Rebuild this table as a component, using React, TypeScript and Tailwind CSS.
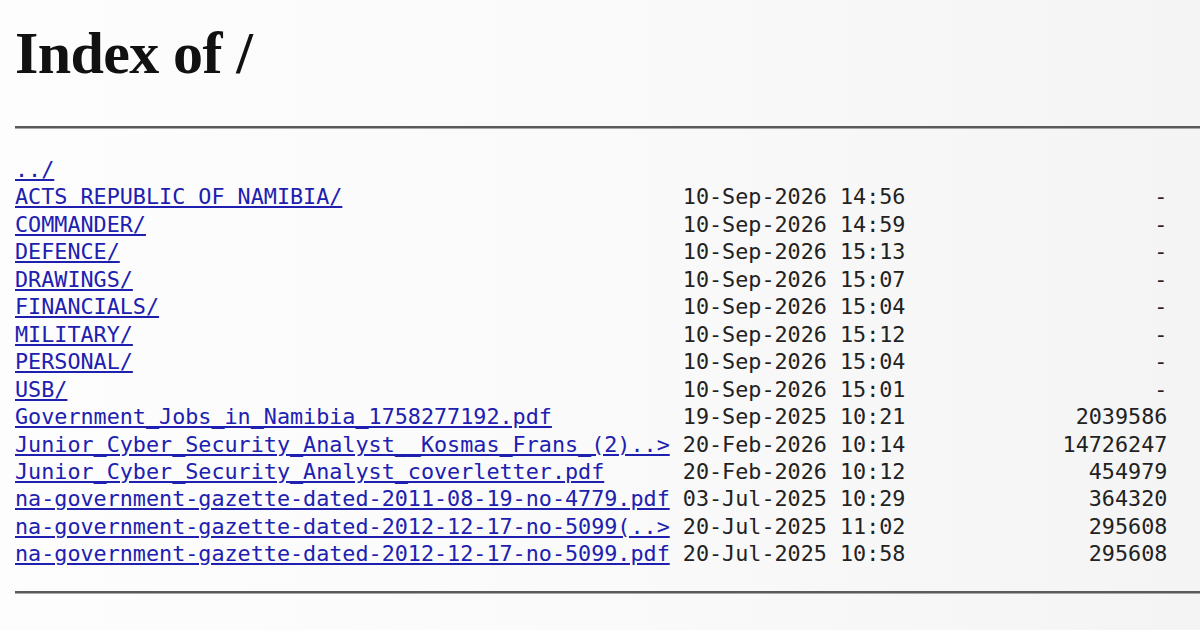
import React from "react";

type Row = { name: string; date: string; size: string };

const rows: Row[] = [
  { name: "ACTS REPUBLIC OF NAMIBIA/", date: "10-Sep-2026 14:56", size: "-" },
  { name: "COMMANDER/", date: "10-Sep-2026 14:59", size: "-" },
  { name: "DEFENCE/", date: "10-Sep-2026 15:13", size: "-" },
  { name: "DRAWINGS/", date: "10-Sep-2026 15:07", size: "-" },
  { name: "FINANCIALS/", date: "10-Sep-2026 15:04", size: "-" },
  { name: "MILITARY/", date: "10-Sep-2026 15:12", size: "-" },
  { name: "PERSONAL/", date: "10-Sep-2026 15:04", size: "-" },
  { name: "USB/", date: "10-Sep-2026 15:01", size: "-" },
  { name: "Government_Jobs_in_Namibia_1758277192.pdf", date: "19-Sep-2025 10:21", size: "2039586" },
  { name: "Junior_Cyber_Security_Analyst__Kosmas_Frans_(2)..>", date: "20-Feb-2026 10:14", size: "14726247" },
  { name: "Junior_Cyber_Security_Analyst_coverletter.pdf", date: "20-Feb-2026 10:12", size: "454979" },
  { name: "na-government-gazette-dated-2011-08-19-no-4779.pdf", date: "03-Jul-2025 10:29", size: "364320" },
  { name: "na-government-gazette-dated-2012-12-17-no-5099(..>", date: "20-Jul-2025 11:02", size: "295608" },
  { name: "na-government-gazette-dated-2012-12-17-no-5099.pdf", date: "20-Jul-2025 10:58", size: "295608" },
];

function Hr() {
  return (
    <div className="h-[3px] w-[1400px] border-t-2 border-b border-t-[#5a5a5a] border-b-[#a8a8a8]" />
  );
}

export default function App() {
  return (
    <div className="w-[1200px] h-[630px] overflow-hidden bg-gradient-to-r from-[#fdfdfd] via-[#fafafa] to-[#f4f4f4] pl-[15px]">
      <h1 className="pt-[23px] text-[60px] leading-[60px] tracking-[-0.6px] font-bold text-[#111] font-['Liberation_Serif',serif]">
        Index of /
      </h1>
      <div className="mt-[43px]">
        <Hr />
      </div>
      <pre className="mt-[27px] text-[21.76px] leading-[27.46px] text-[#222] font-['DejaVu_Sans_Mono',monospace] whitespace-pre">
        <a className="text-[#2020b0] underline">../</a>
        {"\n"}
        {rows.map((r) => (
          <React.Fragment key={r.name}>
            <a className="text-[#2020b0] underline">{r.name}</a>
            {" ".repeat(51 - r.name.length) + r.date + r.size.padStart(20, " ") + "\n"}
          </React.Fragment>
        ))}
      </pre>
      <div className="mt-[23px]">
        <Hr />
      </div>
    </div>
  );
}
